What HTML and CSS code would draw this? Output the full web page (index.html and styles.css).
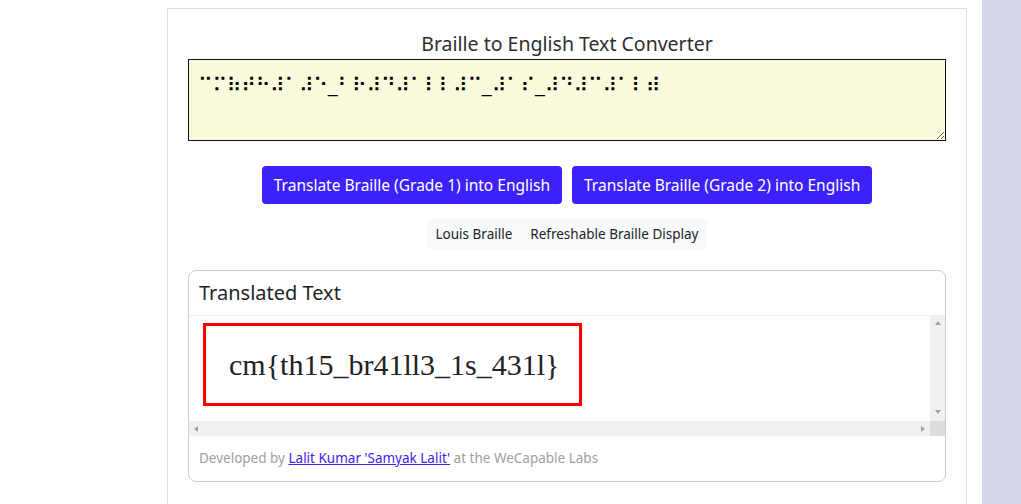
FILE: index.html
```html
<!DOCTYPE html>
<html lang="en">
<head>
<meta charset="utf-8">
<title>Braille to English Text Converter</title>
<link rel="stylesheet" href="styles.css">
</head>
<body>
<div class="page">
  <main class="container">
    <h1 class="title">Braille to English Text Converter</h1>
    <textarea class="braille-input" spellcheck="false">⠉⠍⠷⠞⠓⠼⠁⠼⠑_⠃⠗⠼⠙⠼⠁⠇⠇⠼⠉_⠼⠁⠎_⠼⠙⠼⠉⠼⠁⠇⠾</textarea>
    <div class="actions">
      <button class="btn" type="button">Translate Braille (Grade 1) into English</button>
      <button class="btn" type="button">Translate Braille (Grade 2) into English</button>
    </div>
    <nav class="links">
      <a class="chip" href="#">Louis Braille</a>
      <a class="chip" href="#">Refreshable Braille Display</a>
    </nav>
    <section class="card">
      <header class="card-header">Translated Text</header>
      <div class="card-body">
        <div class="viewport">
          <div class="result">cm{th15_br41ll3_1s_431l}</div>
        </div>
        <div class="vbar"><span class="arrow up"></span><span class="arrow down"></span></div>
        <div class="hbar"><span class="arrow left"></span><span class="arrow right"></span></div>
        <div class="corner"></div>
      </div>
      <footer class="card-footer">Developed by <a class="author" href="#">Lalit Kumar 'Samyak Lalit'</a> at the WeCapable Labs</footer>
    </section>
  </main>
  <aside class="side"></aside>
</div>
</body>
</html>
```
FILE: styles.css
```css
html, body {
  margin: 0;
  padding: 0;
  background: #ffffff;
}

body {
  font-family: "Noto Sans", "DejaVu Sans", sans-serif;
  color: #212529;
}

.page {
  display: flex;
  min-height: 504px;
}

.container {
  box-sizing: border-box;
  width: 800px;
  margin: 8px 0 0 167px;
  padding: 23px 20px 0 20px;
  border: 1px solid #dddddd;
  border-bottom: none;
}

.side {
  margin-left: auto;
  width: 39px;
  background: #d8d8ec;
}

.title {
  margin: 0;
  font-size: 19.5px;
  line-height: 24px;
  font-weight: 400;
  color: #2e2e2e;
  text-align: center;
}

.braille-input {
  display: block;
  box-sizing: border-box;
  width: 100%;
  height: 82px;
  margin: 3px 0 0 0;
  padding: 14px 9px 0 9px;
  border: 1px solid #111111;
  background: #fafadc;
  font-family: "DejaVu Sans", sans-serif;
  font-size: 19.7px;
  line-height: 24px;
  color: #000000;
  resize: vertical;
  overflow: hidden;
}

.actions {
  display: flex;
  justify-content: center;
  gap: 10px;
  margin-top: 25px;
}

.btn {
  height: 38px;
  padding: 0 12px;
  border: none;
  border-radius: 4px;
  background: #3c21fa;
  color: #ffffff;
  font-family: "Noto Sans", sans-serif;
  font-size: 15.5px;
}

.links {
  display: flex;
  justify-content: center;
  margin-top: 15px;
}

.chip {
  padding: 0 9px;
  line-height: 30px;
  background: #f8f9fa;
  color: #212529;
  font-size: 13.5px;
  text-decoration: none;
}

.card {
  margin-top: 21px;
  border: 1px solid #cccccc;
  border-radius: 8px;
  overflow: hidden;
}

.card-header {
  height: 44px;
  padding-left: 10px;
  border-bottom: 1px solid #eeeeee;
  font-size: 20px;
  line-height: 44px;
  color: #212529;
}

.card-body {
  display: grid;
  grid-template-columns: 1fr 15px;
  grid-template-rows: 105px 15px;
}

.viewport {
  overflow: hidden;
  background: #ffffff;
}

.result {
  display: inline-block;
  margin: 7px 0 0 14px;
  padding: 0 20px 0 23px;
  height: 77px;
  border: 3px solid #ff0000;
  font-family: "Liberation Serif", "Times New Roman", serif;
  font-size: 30px;
  line-height: 77px;
  color: #222222;
  white-space: nowrap;
}

.vbar {
  display: flex;
  flex-direction: column;
  justify-content: space-between;
  align-items: center;
  padding: 5px 0 7px 0;
  background: #f1f1f1;
}

.hbar {
  display: flex;
  justify-content: space-between;
  align-items: center;
  padding: 0 5px;
  background: #f1f1f1;
}

.corner {
  background: #dcdcdc;
}

.arrow {
  display: block;
  width: 0;
  height: 0;
}

.arrow.up {
  border-left: 3.5px solid transparent;
  border-right: 3.5px solid transparent;
  border-bottom: 4px solid #a3a3a3;
}

.arrow.down {
  border-left: 3.5px solid transparent;
  border-right: 3.5px solid transparent;
  border-top: 4px solid #a3a3a3;
}

.arrow.left {
  border-top: 3.5px solid transparent;
  border-bottom: 3.5px solid transparent;
  border-right: 4px solid #a3a3a3;
}

.arrow.right {
  border-top: 3.5px solid transparent;
  border-bottom: 3.5px solid transparent;
  border-left: 4px solid #a3a3a3;
}

.card-footer {
  height: 45px;
  padding-left: 10px;
  font-size: 13.5px;
  line-height: 45px;
  color: #a0a0a0;
}

.author {
  color: #3f22f5;
  text-decoration: underline;
}
```
